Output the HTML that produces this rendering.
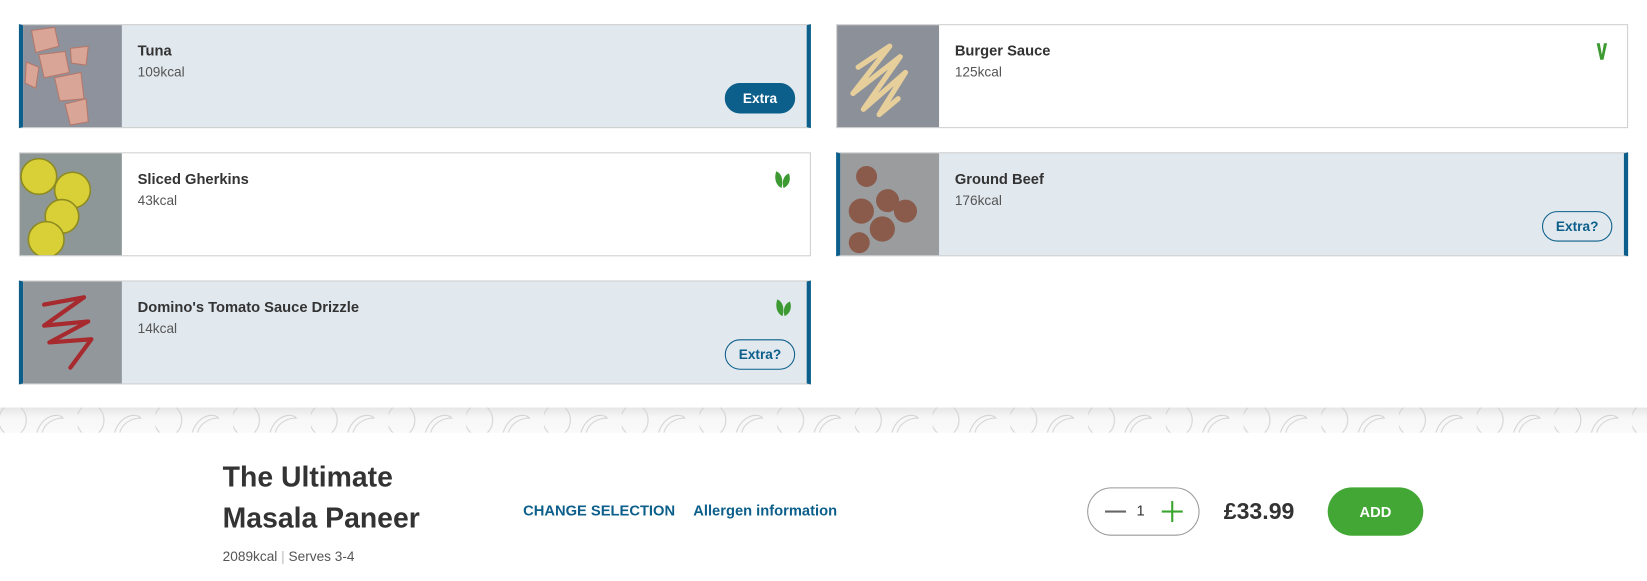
<!DOCTYPE html>
<html><head><meta charset="utf-8">
<style>
*{box-sizing:border-box;margin:0;padding:0}
body{width:1647px;height:581px;background:#fff;font-family:"Liberation Sans",sans-serif;overflow:hidden;color:#333}
#w{position:absolute;left:0;top:0;width:1568px;height:553px;transform:scale(1.0504);transform-origin:0 0}
.card{position:absolute;width:754px;height:99px;border:1px solid #cfcfcf;background:#fff}
.card.sel{background:#e1e8ee;border-left:4px solid #0b5f8a;border-right:4px solid #0b5f8a}
.img{position:absolute;left:0;top:0;width:97px;height:97px;background:#8f959c;overflow:hidden}
.sel .img{width:94px}
.name{position:absolute;left:112px;top:16px;font-size:14px;font-weight:bold;color:#333}
.kcal{position:absolute;left:112px;top:37px;font-size:13px;color:#555}
.sel .name,.sel .kcal{left:109px}
.btn{position:absolute;right:11px;bottom:13px;width:67px;height:29px;border-radius:15px;font-size:13px;font-weight:bold;text-align:center;line-height:27px}
.fill{background:#0b5f8a;color:#fff;border:1px solid #0b5f8a}
.out{border:1px solid #0b5f8a;color:#0b5f8a;background:transparent}
.leaf{position:absolute;right:18px;top:16px}
.band{position:absolute;left:0;top:388px;width:1568px;height:24px;background:linear-gradient(#e6e6e6,#f7f7f7 40%,#fafafa);overflow:hidden}
</style></head><body><div id="w">

<div class="card sel" style="left:18px;top:23px">
 <div class="img" style="background:#8d929c"><svg width="94" height="97"><g fill="#d9a597" stroke="#b5786a" stroke-width="1"><path d="M8 5 L30 2 L34 20 L12 26Z"/><path d="M15 28 L40 25 L44 45 L20 50Z"/><path d="M30 50 L55 45 L58 70 L35 72Z"/><path d="M45 22 L62 20 L60 38 L46 36Z"/><path d="M40 75 L60 70 L62 92 L45 95Z"/><path d="M3 35 L15 40 L12 60 L2 55Z"/></g></svg></div>
 <div class="name">Tuna</div><div class="kcal">109kcal</div>
 <div class="btn fill">Extra</div>
</div>

<div class="card" style="left:796px;top:23px">
 <div class="img" style="background:#8c9098"><svg width="97" height="97"><path d="M20 40 L50 20 L15 65 L60 30 L25 80 L65 45 L40 85 L58 70" fill="none" stroke="#e6cf9a" stroke-width="5" stroke-linecap="round" stroke-linejoin="round"/></svg></div>
 <div class="name">Burger Sauce</div><div class="kcal">125kcal</div>
 <svg style="position:absolute;right:19px;top:17px" width="10" height="16" viewBox="0 0 10 16"><path d="M0 0h3l2 11 2-11h3l-3.5 16h-3z" fill="#3d9a32"/></svg>
</div>

<div class="card" style="left:18px;top:145px">
 <div class="img" style="background:#8e9797"><svg width="97" height="97"><g fill="#d9cf36" stroke="#8c8a20" stroke-width="1.5"><circle cx="18" cy="22" r="17"/><circle cx="50" cy="35" r="17"/><circle cx="40" cy="60" r="16"/><circle cx="25" cy="82" r="17"/></g></svg></div>
 <div class="name">Sliced Gherkins</div><div class="kcal">43kcal</div>
 <svg class="leaf" width="16" height="18" viewBox="0 0 16 18"><path d="M7 17C1 14 0 7 2 1c5 2 7 8 5 16z" fill="#3d9a32"/><path d="M9 17C15 14 16 8 14 3c-5 2-7 8-5 14z" fill="#3d9a32"/></svg>
</div>

<div class="card sel" style="left:796px;top:145px">
 <div class="img" style="background:#9a9c9e"><svg width="94" height="97"><g fill="#8a5a4a"><circle cx="25" cy="22" r="10"/><circle cx="45" cy="45" r="11"/><circle cx="20" cy="55" r="12"/><circle cx="62" cy="55" r="11"/><circle cx="40" cy="72" r="12"/><circle cx="18" cy="85" r="10"/></g></svg></div>
 <div class="name">Ground Beef</div><div class="kcal">176kcal</div>
 <div class="btn out">Extra?</div>
</div>

<div class="card sel" style="left:18px;top:267px">
 <div class="img" style="background:#92979b"><svg width="94" height="97"><path d="M20 22 L58 15 L20 42 L62 38 L25 58 L65 55 L45 82" fill="none" stroke="#a62a2e" stroke-width="4" stroke-linecap="round" stroke-linejoin="round"/></svg></div>
 <div class="name">Domino's Tomato Sauce Drizzle</div><div class="kcal">14kcal</div>
 <svg class="leaf" style="right:14px" width="16" height="18" viewBox="0 0 16 18"><path d="M7 17C1 14 0 7 2 1c5 2 7 8 5 16z" fill="#3d9a32"/><path d="M9 17C15 14 16 8 14 3c-5 2-7 8-5 14z" fill="#3d9a32"/></svg>
 <div class="btn out">Extra?</div>
</div>

<div class="band"><svg width="1568" height="24"><defs><pattern id="p" width="74" height="24" patternUnits="userSpaceOnUse"><ellipse cx="12" cy="12" rx="13" ry="15" fill="none" stroke="#d2d2d2"/><path d="M35 24 C40 8 55 4 60 10 C50 10 42 16 40 24" fill="none" stroke="#d2d2d2"/></pattern></defs><rect width="1568" height="24" fill="url(#p)"/></svg></div>

<div style="position:absolute;left:212px;top:435px;font-size:27px;font-weight:bold;line-height:39px;color:#333">The Ultimate<br>Masala Paneer</div>
<div style="position:absolute;left:212px;top:522px;font-size:13px;color:#555">2089kcal <span style="color:#bbb">|</span> Serves 3-4</div>
<div style="position:absolute;left:498px;top:478px;font-size:14px;font-weight:bold;color:#0b5f8a">CHANGE SELECTION</div>
<div style="position:absolute;left:660px;top:478px;font-size:14px;font-weight:bold;color:#0b5f8a">Allergen information</div>

<div style="position:absolute;left:1035px;top:464px;width:107px;height:46px;border:1px solid #999;border-radius:23px">
 <div style="position:absolute;left:16px;top:21px;width:20px;height:2px;background:#666"></div>
 <div style="position:absolute;left:46px;top:13px;font-size:14px;color:#333">1</div>
 <div style="position:absolute;left:70px;top:21px;width:20px;height:2px;background:#3aa52e"></div>
 <div style="position:absolute;left:79px;top:12px;width:2px;height:20px;background:#3aa52e"></div>
</div>
<div style="position:absolute;left:1165px;top:474px;font-size:22px;font-weight:bold;color:#333">£33.99</div>
<div style="position:absolute;left:1264px;top:464px;width:91px;height:46px;border-radius:23px;background:#43a735;color:#fff;font-size:14px;font-weight:bold;text-align:center;line-height:46px">ADD</div>
</div></body></html>
